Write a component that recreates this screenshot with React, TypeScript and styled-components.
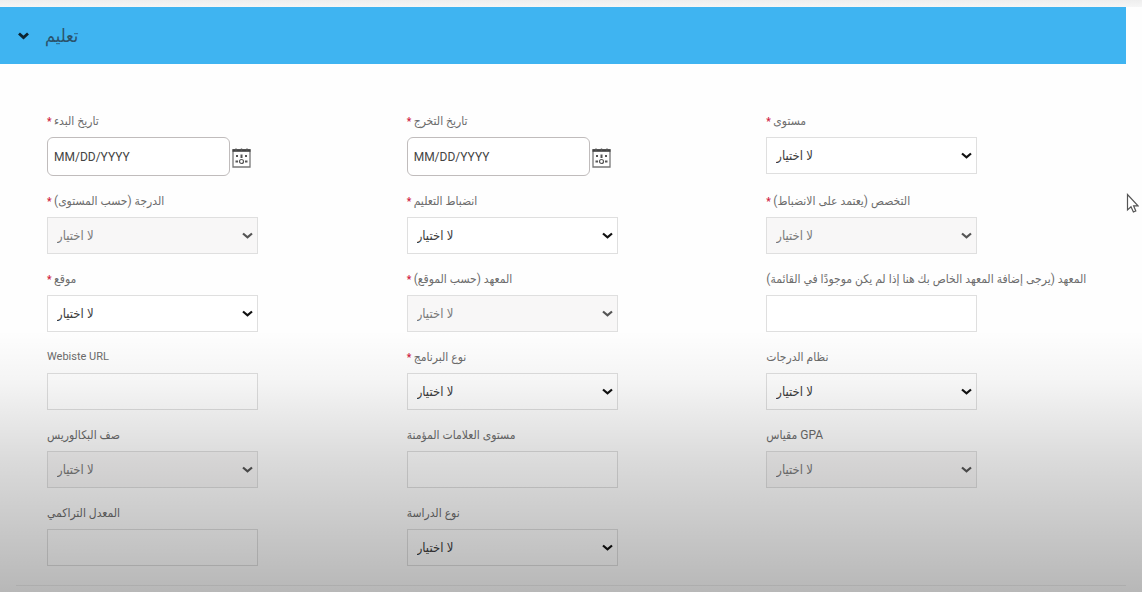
import React, { useId } from "react";
import styled, { createGlobalStyle } from "styled-components";

const GlobalStyle = createGlobalStyle`
  * { box-sizing: border-box; }
  body {
    margin: 0;
    background: #fefefe;
    font-family: Roboto, "DejaVu Sans Condensed", "DejaVu Sans", sans-serif;
  }
`;

const Page = styled.main`
  position: relative;
  min-height: 100vh;
  padding-right: 16px;
  overflow: hidden;
`;

const TopStrip = styled.div`
  height: 7px;
  margin-right: -16px;
  background: linear-gradient(#eeeeee, #f6f6f6);
`;

const SectionHeader = styled.button`
  display: flex;
  align-items: center;
  gap: 16px;
  width: 100%;
  height: 57px;
  padding: 0 18px;
  border: 0;
  background: #3fb4f1;
  color: #2b536b;
  font-family: inherit;
  font-size: 18px;
  line-height: 20px;
`;

const Form = styled.form`
  display: grid;
  grid-template-columns: repeat(3, minmax(0, 1fr));
  row-gap: 15px;
  padding: 47px 0 19px 47px;
`;

const FieldBox = styled.div`
  display: flex;
  flex-direction: column;
  align-items: flex-start;
  gap: 6px;
`;

const Label = styled.label<{ $latin?: boolean }>`
  direction: ${(p) => (p.$latin ? "ltr" : "rtl")};
  height: 20px;
  font-size: ${(p) => (p.$latin ? "11px" : "12px")};
  line-height: 20px;
  white-space: nowrap;
  color: #6c6c6c;
`;

const Required = styled.span`
  color: #d0213f;
  font-size: 10px;
  font-weight: 700;
`;

const Control = styled.div`
  position: relative;
  width: 211px;
  max-width: 100%;
`;

const Select = styled.select`
  display: block;
  width: 100%;
  height: 37px;
  padding: 0 9px;
  appearance: none;
  border: 1px solid #dfdfdf;
  border-radius: 0;
  background: #fff;
  color: #3c3c3c;
  font-family: inherit;
  font-size: 13px;
  opacity: 1;

  &:disabled {
    background: #f8f7f7;
    color: #7a7a7a;
  }
`;

const Arrow = styled.svg<{ $dim?: boolean }>`
  position: absolute;
  top: 15px;
  right: 5px;
  pointer-events: none;
  color: ${(p) => (p.$dim ? "#555" : "#111")};
`;

const TextInput = styled.input`
  display: block;
  width: 100%;
  height: 37px;
  padding: 0 9px;
  border: 1px solid #dfdfdf;
  border-radius: 0;
  background: #fff;
  font: inherit;
`;

const DateRow = styled.div`
  display: flex;
  align-items: center;
  gap: 2px;
`;

const DateInput = styled.input`
  width: 183px;
  height: 39px;
  padding: 0 6px;
  border: 1px solid #c0bcbc;
  border-radius: 6px;
  background: #fff;
  font-family: inherit;
  font-size: 12px;

  &::placeholder {
    color: #444;
    opacity: 1;
  }
`;

const CalendarButton = styled.button`
  display: flex;
  padding: 3px 0 0;
  border: 0;
  background: none;
`;

const Divider = styled.hr`
  margin: 0 0 6px 16px;
  border: 0;
  border-top: 1px solid #eee;
`;

const Shade = styled.div`
  position: absolute;
  right: 0;
  bottom: 0;
  left: 0;
  height: 262px;
  pointer-events: none;
  background: linear-gradient(
    rgba(0, 0, 0, 0),
    rgba(0, 0, 0, 0.04) 20%,
    rgba(0, 0, 0, 0.14) 50%,
    rgba(0, 0, 0, 0.28)
  );
`;

const Pointer = styled.svg`
  position: absolute;
  top: 193px;
  right: 3px;
  pointer-events: none;
`;

const Chevron = () => (
  <svg width="11" height="8" viewBox="0 0 11 8" fill="none" aria-hidden="true">
    <path d="M1 1.5L5.5 5.6L10 1.5" stroke="#0d2430" strokeWidth="2.8" />
  </svg>
);

const CalendarIcon = () => (
  <svg width="19" height="20" viewBox="0 0 19 20" fill="none" aria-hidden="true">
    <path d="M1 2H18V19H1Z" stroke="#777" strokeWidth="1.3" />
    <path d="M0.5 2.5H18.5" stroke="#444" strokeWidth="2.6" />
    <path d="M4 0.5V3M9.5 0.5V3M15 0.5V3" stroke="#555" strokeWidth="1.4" />
    <path
      d="M4 8H6M13 8H15M9.5 6.5V10M3.5 13.5H6M13 13.5H15.5"
      stroke="#555"
      strokeWidth="2"
    />
    <circle cx="9.5" cy="13.5" r="2" stroke="#555" strokeWidth="1.2" />
  </svg>
);

type Kind = "select" | "text" | "date";
interface FieldSpec {
  label: string;
  kind: Kind;
  required?: boolean;
  disabled?: boolean;
  latin?: boolean;
}

const fields: FieldSpec[] = [
  { label: "تاريخ البدء", kind: "date", required: true },
  { label: "تاريخ التخرج", kind: "date", required: true },
  { label: "مستوى", kind: "select", required: true },
  { label: "الدرجة (حسب المستوى)", kind: "select", required: true, disabled: true },
  { label: "انضباط التعليم", kind: "select", required: true },
  { label: "التخصص (يعتمد على الانضباط)", kind: "select", required: true, disabled: true },
  { label: "موقع", kind: "select", required: true },
  { label: "المعهد (حسب الموقع)", kind: "select", required: true, disabled: true },
  { label: "المعهد (يرجى إضافة المعهد الخاص بك هنا إذا لم يكن موجودًا في القائمة)", kind: "text" },
  { label: "Webiste URL", kind: "text", latin: true },
  { label: "نوع البرنامج", kind: "select", required: true },
  { label: "نظام الدرجات", kind: "select" },
  { label: "صف البكالوريس", kind: "select", disabled: true },
  { label: "مستوى العلامات المؤمنة", kind: "text" },
  { label: "GPA مقياس", kind: "select", disabled: true },
  { label: "المعدل التراكمي", kind: "text" },
  { label: "نوع الدراسة", kind: "select" },
];

function Field({ label, kind, required, disabled, latin }: FieldSpec) {
  const id = useId();
  return (
    <FieldBox>
      <Label htmlFor={id} $latin={latin}>
        {label}
        {required && <Required> *</Required>}
      </Label>
      {kind === "date" && (
        <DateRow>
          <DateInput id={id} type="text" placeholder="MM/DD/YYYY" />
          <CalendarButton type="button" aria-label={label}>
            <CalendarIcon />
          </CalendarButton>
        </DateRow>
      )}
      {kind === "text" && (
        <Control>
          <TextInput id={id} type="text" />
        </Control>
      )}
      {kind === "select" && (
        <Control>
          <Select id={id} disabled={disabled}>
            <option>لا اختيار</option>
          </Select>
          <Arrow $dim={disabled} width="11" height="8" viewBox="0 0 11 8" fill="none">
            <path d="M1 1.5L5.5 5.4L10 1.5" stroke="currentColor" strokeWidth="2.2" />
          </Arrow>
        </Control>
      )}
    </FieldBox>
  );
}

export default function App() {
  return (
    <>
      <GlobalStyle />
      <Page>
        <TopStrip />
        <SectionHeader type="button" aria-expanded="true">
          <Chevron />
          <span>تعليم</span>
        </SectionHeader>
        <Form>
          {fields.map((f) => (
            <Field key={f.label} {...f} />
          ))}
        </Form>
        <Divider />
        <Shade />
        <Pointer width="13" height="21" viewBox="0 0 13 21" aria-hidden="true">
          <path
            d="M1.5 1.5V17L5 13.8L7.4 19L9.8 18L7.6 12.8H12Z"
            fill="#fff"
            stroke="#555"
            strokeWidth="1.2"
          />
        </Pointer>
      </Page>
    </>
  );
}
